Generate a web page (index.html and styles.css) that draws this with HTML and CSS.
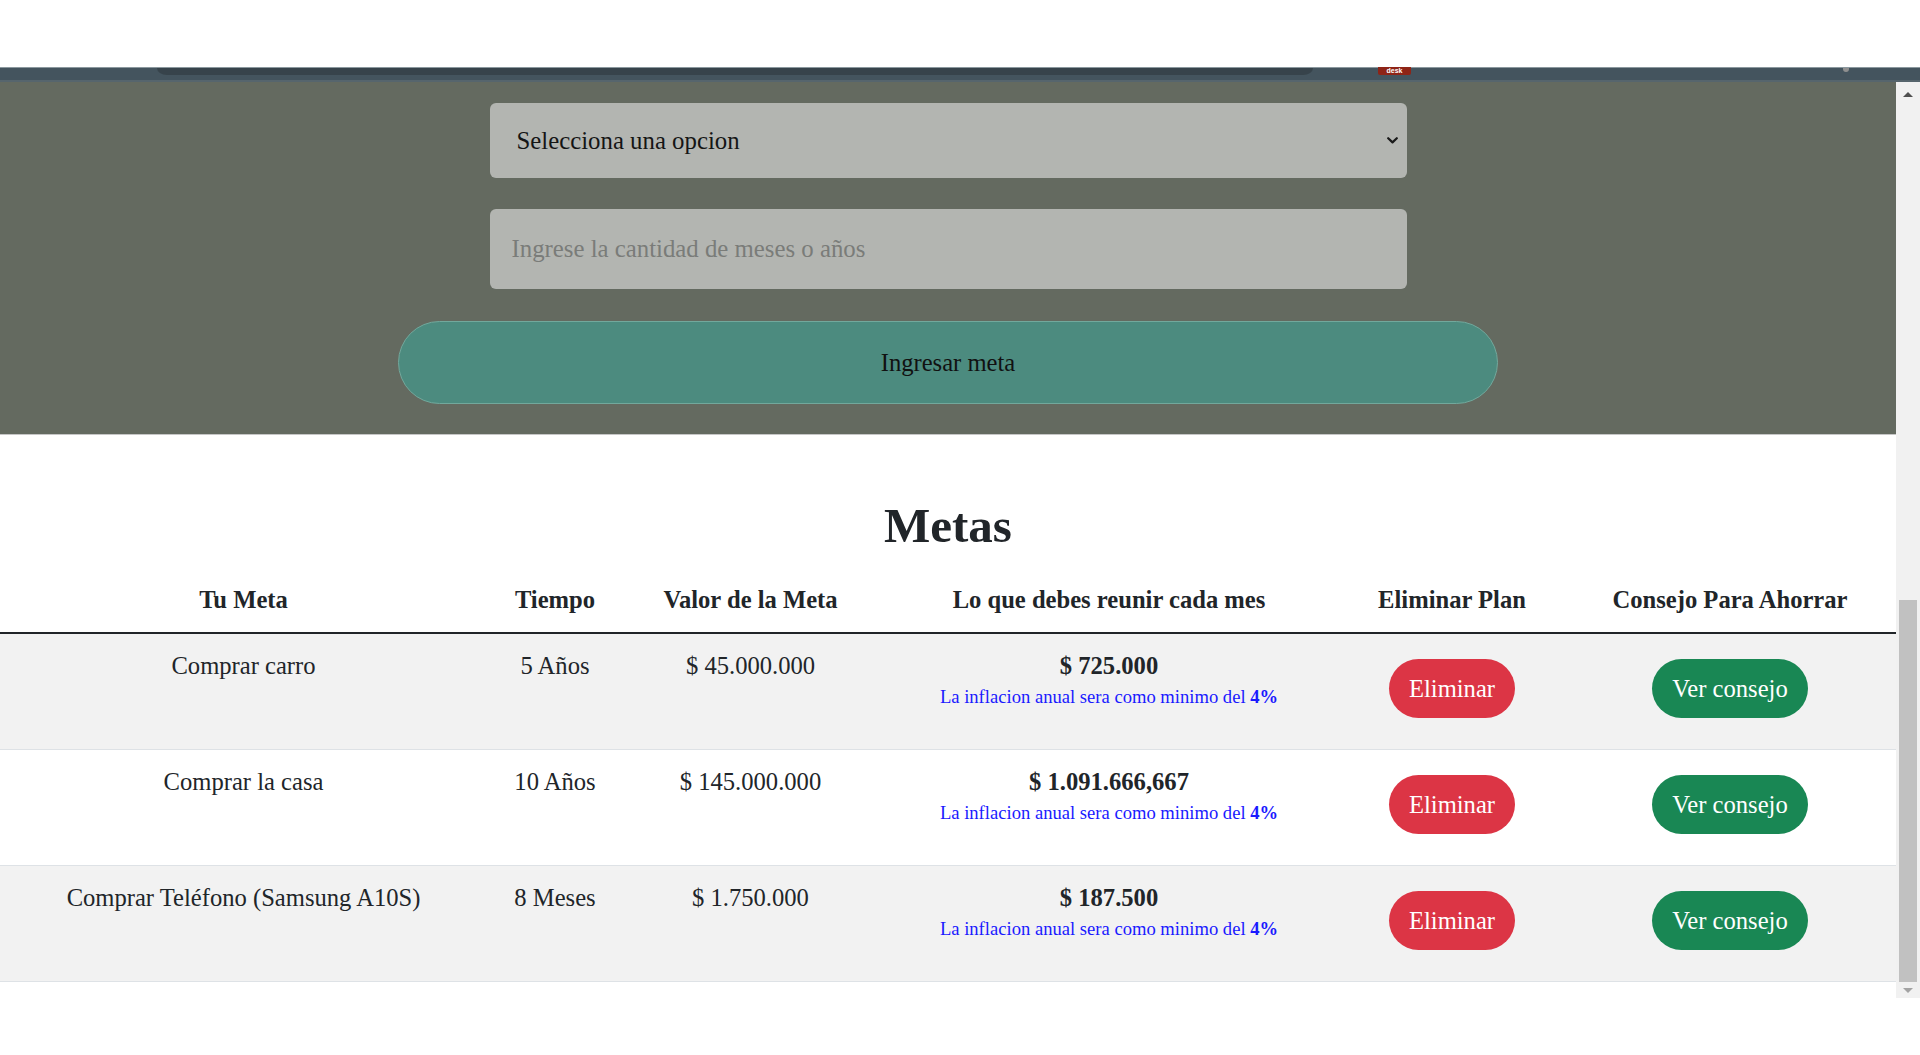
FILE: index.html
```html
<!DOCTYPE html>
<html lang="es">
<head>
<meta charset="utf-8">
<title>Metas</title>
<link rel="stylesheet" href="styles.css">
</head>
<body>
<div class="top-blank"></div>
<div class="browser-strip">
  <div class="strip-bar"></div>
  <div class="strip-badge"><span>desk</span></div>
  <div class="strip-dot"></div>
</div>
<div class="viewport">
  <main class="page">
    <section class="form-section">
      <div class="select-wrap">
        <select class="field field-select">
          <option>Selecciona una opcion</option>
        </select>
        <svg class="chevron" viewBox="0 0 11 7" aria-hidden="true"><path d="M1.2 1.2 L5.5 5.4 L9.8 1.2" fill="none" stroke="#1a1a1a" stroke-width="2.2" stroke-linecap="round" stroke-linejoin="round"/></svg>
      </div>
      <input class="field field-input" type="text" placeholder="Ingrese la cantidad de meses o años">
      <button class="submit-btn" type="button">Ingresar meta</button>
    </section>
    <section class="goals">
      <h1 class="goals-title">Metas</h1>
      <table class="goals-table">
        <colgroup>
          <col class="c1"><col class="c2"><col class="c3"><col class="c4"><col class="c5"><col class="c6">
        </colgroup>
        <thead>
          <tr>
            <th>Tu Meta</th>
            <th>Tiempo</th>
            <th>Valor de la Meta</th>
            <th>Lo que debes reunir cada mes</th>
            <th>Eliminar Plan</th>
            <th>Consejo Para Ahorrar</th>
          </tr>
        </thead>
        <tbody>
          <tr>
            <td>Comprar carro</td>
            <td>5 Años</td>
            <td>$ 45.000.000</td>
            <td><strong>$ 725.000</strong><small class="note">La inflacion anual sera como minimo del <b>4%</b></small></td>
            <td><button class="btn btn-danger" type="button">Eliminar</button></td>
            <td><button class="btn btn-success" type="button">Ver consejo</button></td>
          </tr>
          <tr>
            <td>Comprar la casa</td>
            <td>10 Años</td>
            <td>$ 145.000.000</td>
            <td><strong>$ 1.091.666,667</strong><small class="note">La inflacion anual sera como minimo del <b>4%</b></small></td>
            <td><button class="btn btn-danger" type="button">Eliminar</button></td>
            <td><button class="btn btn-success" type="button">Ver consejo</button></td>
          </tr>
          <tr>
            <td>Comprar Teléfono (Samsung A10S)</td>
            <td>8 Meses</td>
            <td>$ 1.750.000</td>
            <td><strong>$ 187.500</strong><small class="note">La inflacion anual sera como minimo del <b>4%</b></small></td>
            <td><button class="btn btn-danger" type="button">Eliminar</button></td>
            <td><button class="btn btn-success" type="button">Ver consejo</button></td>
          </tr>
        </tbody>
      </table>
    </section>
  </main>
  <div class="scrollbar">
    <div class="sb-up"></div>
    <div class="sb-track"><div class="sb-thumb"></div></div>
    <div class="sb-down"></div>
  </div>
</div>
<div class="bottom-blank"></div>
</body>
</html>
```
FILE: styles.css
```css
* { box-sizing: border-box; }
html, body { margin: 0; padding: 0; }
body {
  width: 1920px;
  height: 1055px;
  overflow: hidden;
  background: #fff;
  font-family: "Liberation Serif", "Times New Roman", serif;
  color: #212529;
}
.top-blank { height: 67px; background: #fff; }

.browser-strip {
  height: 15px;
  display: flex;
  align-items: flex-start;
  background: #44545e;
  border-top: 1px solid #8b989e;
  border-bottom: 2px solid #56656d;
}
.strip-bar {
  margin-left: 157px;
  width: 1156px;
  height: 7px;
  background: #37434b;
  border-radius: 0 0 10px 10px / 0 0 7px 7px;
}
.strip-badge {
  margin-left: 65px;
  width: 33px;
  height: 8px;
  margin-top: -1px;
  background: #8e2417;
  border-radius: 0 0 2px 2px;
  color: #fff;
  font: bold 7px "Liberation Sans", sans-serif;
  text-align: center;
  line-height: 8px;
}
.strip-dot {
  margin-left: 432px;
  width: 6px;
  height: 4px;
  background: #8f8f8f;
  border-radius: 0 0 3px 3px;
}

.viewport { display: flex; height: 916px; }
.page { width: 1896px; height: 916px; overflow: hidden; background: #fff; }

.scrollbar {
  width: 24px;
  height: 916px;
  background: #f1f1f1;
  display: flex;
  flex-direction: column;
}
.sb-up, .sb-down { display: flex; align-items: center; justify-content: center; }
.sb-up { height: 25px; }
.sb-up::before {
  content: "";
  border-left: 5px solid transparent;
  border-right: 5px solid transparent;
  border-bottom: 5px solid #505050;
}
.sb-track { flex: 1; padding: 493px 3px 0; }
.sb-thumb { height: 382px; background: #c1c1c1; }
.sb-down { height: 16px; }
.sb-down::before {
  content: "";
  border-left: 5px solid transparent;
  border-right: 5px solid transparent;
  border-top: 5px solid #a3a3a3;
}

/* form */
.form-section {
  height: 353px;
  background: #646a60;
  padding-top: 21px;
  border-bottom: 1px solid #c6c6c6;
  display: flex;
  flex-direction: column;
  align-items: center;
}
.field {
  width: 917px;
  border: none;
  border-radius: 6px;
  background: #b3b5b1;
  font-family: "Liberation Serif", "Times New Roman", serif;
  font-size: 24.8px;
  color: #151515;
  outline: none;
}
.select-wrap { position: relative; width: 917px; height: 75px; margin-bottom: 31px; }
.field-select {
  height: 75px;
  appearance: none;
  -webkit-appearance: none;
  padding: 0 0 0 27px;
}
.chevron { position: absolute; right: 9px; top: 34px; width: 11px; height: 7px; }
.field-input { height: 80px; margin-bottom: 32px; padding: 0 22px; }
.field-input::placeholder { color: #7a7c79; }
.submit-btn {
  width: 1100px;
  height: 83px;
  border: 1px solid #72a89c;
  border-radius: 42px;
  background: #4c8b7f;
  font-family: "Liberation Serif", "Times New Roman", serif;
  font-size: 24.6px;
  color: #111;
}

/* goals */
.goals-title {
  margin: 62px 0 18px;
  font-size: 49px;
  line-height: 1.2;
  font-weight: bold;
  text-align: center;
  color: #212529;
}
.goals-table {
  width: 1896px;
  table-layout: fixed;
  border-collapse: collapse;
  font-size: 24.6px;
  line-height: 36px;
  text-align: center;
}
.c1 { width: 487px; }
.c2 { width: 136px; }
.c3 { width: 255px; }
.c4 { width: 462px; }
.c5 { width: 224px; }
.c6 { width: 332px; }
.goals-table th {
  padding: 8px 8px 14px;
  font-weight: bold;
  border-bottom: 2px solid #212529;
}
.goals-table td {
  padding: 14px 8px 31px;
  vertical-align: top;
  border-bottom: 1px solid #dee2e6;
}
.goals-table tbody tr:nth-child(odd) td { background: #f2f2f2; }
.goals-table strong { display: block; font-weight: bold; }
.note {
  display: block;
  font-size: 18.6px;
  line-height: 26px;
  color: #1a1aff;
}
.note b { font-weight: bold; }
.btn {
  display: block;
  margin: 11px auto 0;
  height: 59px;
  padding: 0 20px;
  border: none;
  border-radius: 30px;
  font-family: "Liberation Serif", "Times New Roman", serif;
  font-size: 24.6px;
  line-height: 59px;
  color: #fff;
}
.btn-danger { background: #dc3545; }
.btn-success { background: #198754; }
.bottom-blank { height: 57px; background: #fff; }
```
